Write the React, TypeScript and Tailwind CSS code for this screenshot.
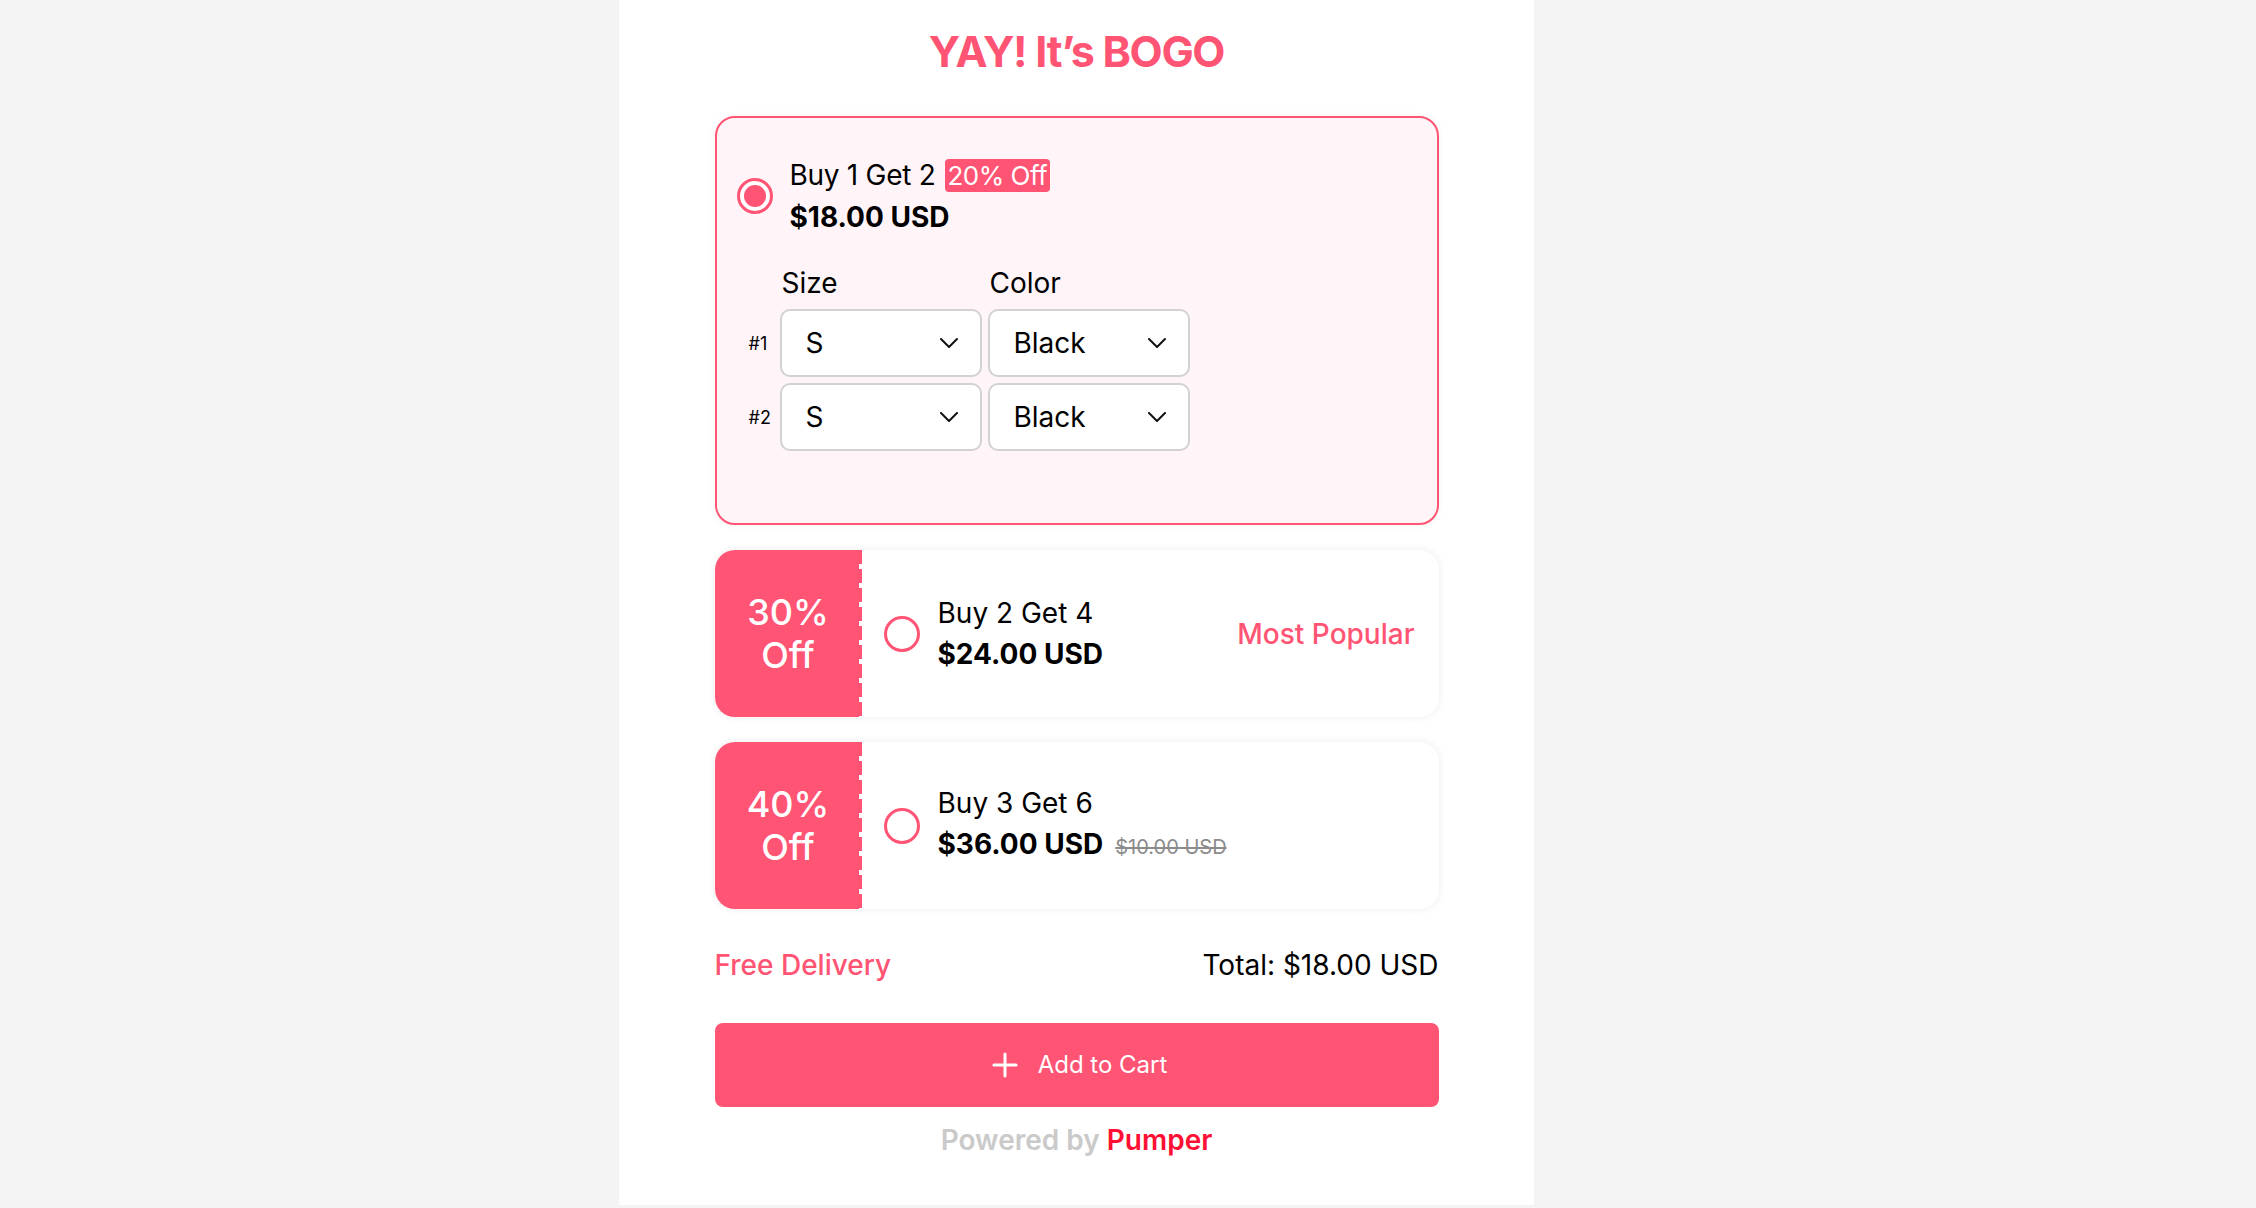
import { Plus } from "lucide-react";

const pink = "#ff5473";

const rows = [
  { label: "#1", size: "S", color: "Black" },
  { label: "#2", size: "S", color: "Black" },
];

function Radio({ checked }: { checked?: boolean }) {
  return (
    <div className="flex h-[36px] w-[36px] shrink-0 items-center justify-center rounded-full border-[3.5px] border-[#ff5473] bg-white">
      {checked && <div className="h-[22px] w-[22px] rounded-full bg-[#ff5473]" />}
    </div>
  );
}

function Chevron() {
  return (
    <svg width="18" height="10" viewBox="0 0 18 10" fill="none" className="shrink-0">
      <polyline points="1,1 9,9 17,1" stroke="#111" strokeWidth="2" strokeLinecap="round" strokeLinejoin="round" />
    </svg>
  );
}

function FakeSelect({ value }: { value: string }) {
  return (
    <div className="flex h-[68px] items-center justify-between rounded-[10px] border-2 border-[#d2d2d2] bg-white pl-[24px] pr-[22px] text-[28px] text-black">
      <span>{value}</span>
      <Chevron />
    </div>
  );
}

function OfferCard({
  pct,
  title,
  price,
  compare,
  tag,
}: {
  pct: string;
  title: string;
  price: string;
  compare?: string;
  tag?: string;
}) {
  return (
    <div className="flex h-[167px] overflow-hidden rounded-[20px] bg-white shadow-[0_0_8px_rgba(0,0,0,0.08)]">
      {/* discount stub with perforated edge */}
      <div className="flex w-[144px] shrink-0 flex-col items-center justify-center bg-[#ff5473] pl-[3px] text-center text-[36px] font-medium leading-[43px] text-white">
        <span>{pct}</span>
        <span>Off</span>
      </div>
      <div className="w-[3px] shrink-0 bg-[repeating-linear-gradient(to_bottom,#ff5473_0px,#ff5473_14px,#ffffff_14px,#ffffff_19px)]" />
      <div className="flex flex-1 items-center pl-[22px] pr-[24px]">
        <Radio />
        <div className="ml-[18px] text-[28px] leading-[41px] text-black">
          <div>{title}</div>
          <div className="flex items-baseline gap-[12px]">
            <span className="font-bold">{price}</span>
            {compare && <span className="text-[20px] text-[#8c8c8c] line-through">{compare}</span>}
          </div>
        </div>
        {tag && <div className="ml-auto text-[28px] font-medium text-[#ff5473]">{tag}</div>}
      </div>
    </div>
  );
}

export default function App() {
  return (
    <div className="h-[1208px] w-full bg-[#f4f4f4] font-['Inter',sans-serif]">
      <div className="ml-[619px] h-[1205px] w-[915px] bg-white pt-[27px]">
        <h1 className="text-center text-[43px] font-bold leading-[48px] tracking-[-0.03em]" style={{ color: pink }}>
          YAY! It’s BOGO
        </h1>

        <div className="mx-auto mt-[41px] w-[724px]">
          {/* selected offer */}
          <div className="rounded-[20px] border-2 border-[#ff5473] bg-[#fff5f8] pb-[72px] pl-[20px] pt-[36px] shadow-[0_0_8px_rgba(0,0,0,0.05)]">
            <div className="flex items-center gap-[17px]">
              <Radio checked />
              <div className="text-[28px] leading-[42px] text-black">
                <div className="flex items-center">
                  <span className="tracking-[-0.01em]">Buy 1 Get 2</span>
                  <span className="ml-[9px] rounded-[4px] bg-[#ff5473] px-[3px] text-[26px] leading-[33px] tracking-[-0.02em] text-white">20% Off</span>
                </div>
                <div className="font-bold">$18.00 USD</div>
              </div>
            </div>

            <div className="ml-[10px] mt-[26px] grid grid-cols-[27px_202px_202px] items-center gap-x-[6px] gap-y-[6px] text-black">
              <div />
              <div className="pl-[2px] text-[28px] leading-[39px]">Size</div>
              <div className="pl-[2px] text-[28px] leading-[39px]">Color</div>
              {rows.map((r) => (
                <div key={r.label} className="contents">
                  <div className="pl-[2px] text-[18px]">{r.label}</div>
                  <FakeSelect value={r.size} />
                  <FakeSelect value={r.color} />
                </div>
              ))}
            </div>
          </div>

          <div className="mt-[25px] flex flex-col gap-[25px]">
            <OfferCard pct="30%" title="Buy 2 Get 4" price="$24.00 USD" tag="Most Popular" />
            <OfferCard pct="40%" title="Buy 3 Get 6" price="$36.00 USD" compare="$10.00 USD" />
          </div>

          <div className="mt-[35px] flex items-center justify-between text-[28px] leading-[42px]">
            <span className="font-medium text-[#ff5473]">Free Delivery</span>
            <span className="text-black">Total: $18.00 USD</span>
          </div>

          <button className="mt-[37px] flex h-[84px] w-full items-center justify-center gap-[14px] rounded-[8px] bg-[#ff5473] text-[24px] text-white">
            <Plus size={38} strokeWidth={1.9} />
            <span>Add to Cart</span>
          </button>

          <div className="mt-[12px] text-center text-[28px] font-semibold leading-[42px]">
            <span className="text-[#cacaca]">Powered by </span>
            <span className="text-[#ff0f33]">Pumper</span>
          </div>
        </div>
      </div>
    </div>
  );
}
